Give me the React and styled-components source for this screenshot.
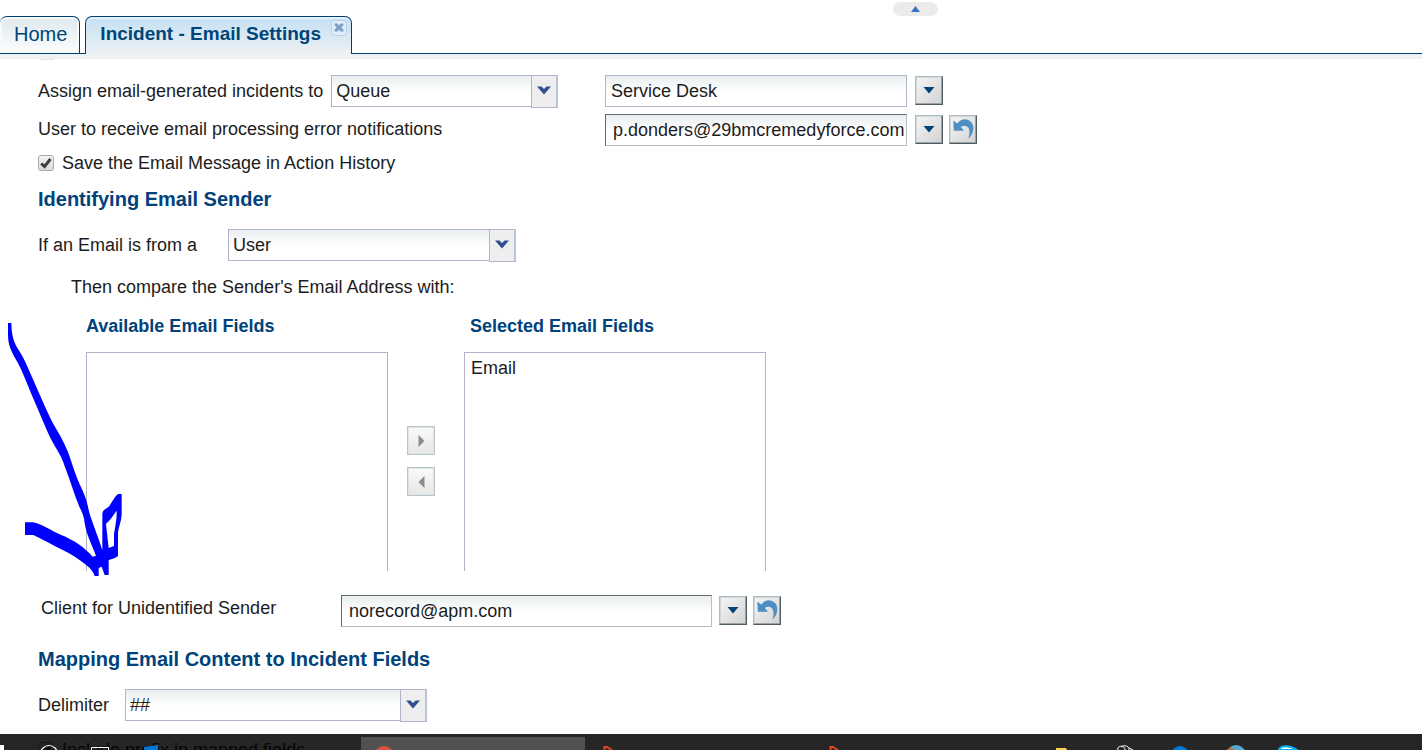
import styled, { createGlobalStyle, css } from 'styled-components';

const App = () => {
  return (
    <Page>
      <GlobalStyle />
      <TopStrip>
        <CollapseButton aria-label="Collapse header">
          <svg width="9" height="6" viewBox="0 0 9 6">
            <path d="M4.5 0 L9 6 H0 Z" fill="#3a72bd" />
          </svg>
        </CollapseButton>
      </TopStrip>
      <TabBar>
        <Tab>
          <TabLink href="#home">Home</TabLink>
        </Tab>
        <Tab $active>
          <TabLink href="#email-settings">Incident - Email Settings</TabLink>
          <CloseButton aria-label="Close tab">
            <svg width="16" height="16" viewBox="0 0 16 16">
              <rect x="0.5" y="0.5" width="15" height="15" rx="3" fill="#e0edfb" stroke="#b5cff0" />
              <path
                d="M3.5 3.5 H6.5 L8 5.5 L9.5 3.5 H12.5 V5 L10.5 7.5 L12.5 10 V11.5 H9.5 L8 9.5 L6.5 11.5 H3.5 V10 L5.5 7.5 L3.5 5 Z"
                fill="#7f9fcb"
              />
            </svg>
          </CloseButton>
        </Tab>
      </TabBar>

      <Content>
        <ScrolledEdge />
        <AssignGrid>
          <Field>
            <Label htmlFor="assignType">Assign email-generated incidents to</Label>
            <Dropdown id="assignType" value="Queue" $width={227} />
          </Field>
          <TextInput aria-label="Queue name" defaultValue="Service Desk" />
          <LookupButtons />
          <Label htmlFor="errorUser">User to receive email processing error notifications</Label>
          <TextInput id="errorUser" $lookup defaultValue="p.donders@29bmcremedyforce.com" />
          <LookupButtons undo />
        </AssignGrid>

        <CheckRow>
          <Checkbox id="saveHistory" />
          <Label htmlFor="saveHistory">Save the Email Message in Action History</Label>
        </CheckRow>

        <SectionTitle>Identifying Email Sender</SectionTitle>
        <SenderRow>
          <Label htmlFor="senderType">If an Email is from a</Label>
          <Dropdown id="senderType" value="User" $width={288} />
        </SenderRow>

        <Hint>Then compare the Sender's Email Address with:</Hint>
        <PickerGrid>
          <ListTitle id="available">Available Email Fields</ListTitle>
          <ListTitle id="selected" $second>
            Selected Email Fields
          </ListTitle>
          <ListBox aria-labelledby="available" />
          <MoveButtons>
            <MoveButton aria-label="Add field">
              <svg width="7" height="12" viewBox="0 0 7 12">
                <path d="M0.5 0 L6.5 6 L0.5 12 Z" fill="#8b8b8b" />
              </svg>
            </MoveButton>
            <MoveButton aria-label="Remove field">
              <svg width="7" height="12" viewBox="0 0 7 12">
                <path d="M6.5 0 L0.5 6 L6.5 12 Z" fill="#8b8b8b" />
              </svg>
            </MoveButton>
          </MoveButtons>
          <ListBox aria-labelledby="selected">
            <li>Email</li>
          </ListBox>
        </PickerGrid>

        <ClientRow>
          <Label htmlFor="client">Client for Unidentified Sender</Label>
          <TextInput id="client" $lookup defaultValue="norecord@apm.com" />
          <LookupButtons undo />
        </ClientRow>

        <SectionTitle>Mapping Email Content to Incident Fields</SectionTitle>
        <DelimiterRow>
          <Label htmlFor="delimiter">Delimiter</Label>
          <Dropdown id="delimiter" value="##" $width={302} />
        </DelimiterRow>
        <CheckRow>
          <Checkbox id="prefix" />
          <Label htmlFor="prefix">Include prefix in mapped fields</Label>
        </CheckRow>
      </Content>

      <InkArrow />
      <Taskbar />
    </Page>
  );
};

const Dropdown = ({ id, value, $width }) => (
  <SelectWrapper $width={$width}>
    <Select id={id} defaultValue={value}>
      <option>{value}</option>
    </Select>
    <SelectCap>
      <svg width="14" height="9" viewBox="0 0 14 9">
        <path d="M0 0.5 H4.5 L7 3 L9.5 0.5 H14 L7 8.5 Z" fill="#2f4f8f" />
      </svg>
    </SelectCap>
  </SelectWrapper>
);

const LookupButtons = ({ undo }) => (
  <ButtonGroup>
    <IconButton aria-label="Look up">
      <svg width="12" height="7" viewBox="0 0 12 7">
        <path d="M0.5 0 H11.5 L6 6.5 Z" fill="#00427a" />
      </svg>
    </IconButton>
    {undo && (
      <IconButton aria-label="Clear">
        <svg width="25" height="25" viewBox="2 2 25 25">
          <path
            d="M4.3 5.5 L8.2 8.6 C11 5.2 14 4 17 4.4 C21.5 5 24.5 8.5 24.3 13.5 C24 18 22.5 21 19.3 23.4 C20.7 19.5 21 16.5 19.8 13.5 C18.5 10.6 15 9.6 11.8 11.9 L15 15.8 H4.8 Z"
            fill="#4d8fc2"
          />
        </svg>
      </IconButton>
    )}
  </ButtonGroup>
);

const Checkbox = ({ id }) => (
  <CheckWrapper>
    <CheckInput type="checkbox" id={id} defaultChecked />
    <CheckMark width="12" height="12" viewBox="0 0 12 12">
      <path d="M1.2 6.5 L4.5 9.5 L10.5 2" fill="none" stroke="#404040" strokeWidth="3" />
    </CheckMark>
  </CheckWrapper>
);

const InkArrow = () => (
  <Ink width="140" height="280" viewBox="0 0 420 840" aria-hidden="true">
    <path
      d="M24 39 H34 C35 78 42 96 50 110 C60 126 70 142 77 158 L100 210 C120 256 140 302 158 338 C176 368 192 396 203 424 C214 452 220 476 232 506 C242 530 254 552 260 574 C265 592 266 606 274 626 C284 656 298 690 307 721 V612 C309 596 320 598 328 588 C338 574 342 562 354 552 H365 V612 C364 636 356 650 354 668 V738 C346 746 336 746 326 750 V795 H314 L305 770 L296 774 V798 H284 C280 786 272 776 262 768 C238 748 214 732 188 720 C158 706 128 688 100 675 H75 V637 H98 C126 642 152 662 182 674 C222 690 254 712 278 740 L288 737 C276 706 260 676 254 640 C252 618 246 606 238 590 C222 552 210 510 196 474 C188 448 178 430 168 414 C156 394 146 374 136 350 L90 242 C78 214 68 186 54 160 C40 134 24 112 24 76 Z M350 602 C340 614 332 630 318 641 L326 714 L342 708 V672 C346 648 351 626 350 602 Z"
      fill="#0000ff"
      fillRule="evenodd"
    />
  </Ink>
);

const Taskbar = () => (
  <TaskbarStrip>
    <ActiveTask />
    <TaskIcons height="16" width="1300" viewBox="0 0 1300 16" aria-hidden="true">
      <rect x="0" y="11" width="4" height="5" fill="#fff" />
      <circle cx="49" cy="20" r="8.5" fill="none" stroke="#fff" strokeWidth="1.2" />
      <path d="M91.5 16 V13.5 H108.5 V16" fill="none" stroke="#fff" />
      <path d="M144 13 L158 11 V16 H144 Z" fill="#0078d4" />
      <circle cx="384" cy="22" r="10" fill="#dc4f41" />
      <path d="M604.5 16 V13 H607 L612 16" fill="none" stroke="#e8431c" strokeWidth="2" />
      <path d="M830.5 16 V13 H833 L838 16" fill="none" stroke="#e8431c" strokeWidth="2" />
      <path d="M1056 16 V14 H1066 L1067 16 Z" fill="#ffd24a" />
      <path
        d="M1118 16 C1116 12 1125 10 1125 16 M1121 13 C1125 10 1130 13 1129 16 M1129 14 L1133 16"
        fill="none"
        stroke="#fff"
      />
      <circle cx="1180" cy="21" r="9" fill="#0078d7" />
      <circle cx="1236" cy="21" r="10" fill="#54a9cc" />
      <path d="M1227 16 L1231 13 L1234 16 Z" fill="#c66a38" />
      <path d="M1279 16 C1280 11 1290 11 1297 16 Z" fill="#fff" stroke="#00aff0" strokeWidth="2" />
    </TaskIcons>
  </TaskbarStrip>
);

const GlobalStyle = createGlobalStyle`
  * {
    box-sizing: border-box;
  }
  body {
    margin: 0;
    background: white;
    color: #1c1c1c;
    font-family: 'Liberation Sans', Arial, sans-serif;
    font-size: 18px;
    line-height: 20px;
  }
  button, input, select {
    font: inherit;
    color: inherit;
    margin: 0;
  }
  button {
    padding: 0;
  }
`;

const Page = styled.div`
  position: relative;
  height: 100vh;
  overflow: hidden;
`;
const TopStrip = styled.div`
  height: 16px;
  padding-top: 2px;
  padding-left: 62.8%;
`;
const CollapseButton = styled.button`
  display: flex;
  justify-content: center;
  align-items: center;
  width: 45px;
  height: 14px;
  border: none;
  border-radius: 7px;
  background: #ebebeb;
`;
const TabBar = styled.nav`
  display: flex;
  gap: 5px;
  height: 43px;
  border-bottom: 5px solid #edf1f4;
  background: linear-gradient(#004071, #004071) bottom / 100% 1px no-repeat;
`;
const Tab = styled.div`
  display: flex;
  height: 38px;
  padding: 0 12px 0 14px;
  border: 1px solid #004071;
  border-radius: 7px 7px 0 0;
  background: linear-gradient(#dfe9ee, #fcfdfd);
  box-shadow: inset 0 0 0 2px #f6fafb;
  font-size: 20px;

  &:first-child {
    border-left: none;
  }

  ${(props) =>
    props.$active &&
    css`
      padding: 0 4px 0 14px;
      border-bottom: none;
      background: linear-gradient(#c4e0f3, #edf1f4);
      box-shadow: inset 0 2px 0 #e4f1fa;
      font-size: 19px;
      font-weight: 700;
    `}
`;
const TabLink = styled.a`
  color: #004578;
  line-height: 34px;
  text-decoration: none;
  white-space: nowrap;
`;
const CloseButton = styled.button`
  width: 16px;
  height: 16px;
  margin: 3px 0 0 10px;
  border: none;
  background: none;
  line-height: 0;
`;
const Content = styled.main`
  padding-left: 38px;
`;
const ScrolledEdge = styled.div`
  width: 14px;
  height: 1px;
  margin: 0 2px 15px;
  background: #e4e4e4;
`;
const AssignGrid = styled.div`
  display: grid;
  grid-template-columns: 559px 302px auto;
  grid-auto-rows: 32px;
  column-gap: 8px;
  row-gap: 7px;

  & > label {
    line-height: 30px;
  }
`;
const Field = styled.div`
  display: flex;
  gap: 8px;

  label {
    line-height: 32px;
  }
`;
const Label = styled.label`
  white-space: nowrap;
`;
const TextInput = styled.input`
  width: 100%;
  height: 32px;
  padding: 0 5px;
  border: 1px solid #b2b2c8;
  border-radius: 0;
  background: linear-gradient(#e9eeee, #fff 16px);

  ${(props) =>
    props.$lookup &&
    css`
      padding: 0 0 0 7px;
      border-color: #606b70 #b4c0c8 #b4c0c8 #606b70;
    `}
`;
const SelectWrapper = styled.div`
  display: grid;
  flex: none;
  width: ${(props) => props.$width}px;
  height: 33px;
`;
const Select = styled.select`
  grid-area: 1 / 1;
  width: 100%;
  height: 32px;
  padding: 0 30px 0 4px;
  appearance: none;
  border: 1px solid #b2b2c8;
  border-radius: 0;
  background: linear-gradient(#e9eeee, #fff 16px);
  line-height: 20px;
`;
const SelectCap = styled.span`
  grid-area: 1 / 1;
  justify-self: end;
  display: flex;
  justify-content: center;
  width: 27px;
  height: 33px;
  padding-top: 10px;
  border: 1px solid #b2b2c8;
  border-right: 2px solid #b8c4dc;
  background: #eee;
  pointer-events: none;
`;
const ButtonGroup = styled.div`
  display: flex;
  align-items: flex-start;
  gap: 6px;
  padding-top: 1px;
`;
const IconButton = styled.button`
  display: flex;
  justify-content: center;
  align-items: center;
  width: 28px;
  height: 29px;
  border: 1px solid;
  border-color: #b0bcc2 #4f5b62 #4f5b62 #b0bcc2;
  box-shadow: inset -1px -1px 0 #9aa2a6, inset 1px 1px 0 #d0d8dc;
  background: linear-gradient(135deg, #f6f6f6, #d2d2d2);
`;
const CheckRow = styled.div`
  display: flex;
  align-items: center;
  gap: 8px;
  height: 20px;
  margin-top: 7px;
`;
const CheckWrapper = styled.span`
  display: grid;
  place-items: center;
  width: 16px;
  height: 16px;
`;
const CheckInput = styled.input`
  grid-area: 1 / 1;
  width: 16px;
  height: 16px;
  appearance: none;
  border: 1px solid #a9a9a9;
  border-radius: 3px;
  background: linear-gradient(#f2f2f2, #dcdcdc);
`;
const CheckMark = styled.svg`
  grid-area: 1 / 1;
  pointer-events: none;

  ${CheckInput}:not(:checked) + & {
    visibility: hidden;
  }
`;
const SectionTitle = styled.h2`
  margin: 14px 0 18px;
  color: #00427a;
  font-size: 20px;
  line-height: 24px;
`;
const SenderRow = styled.div`
  display: grid;
  grid-template-columns: 190px auto;
  line-height: 32px;
`;
const Hint = styled.p`
  margin: 15px 0 0 33px;
`;
const PickerGrid = styled.div`
  display: grid;
  grid-template-columns: 302px 76px 302px;
  grid-template-rows: 55px 219px;
  padding-left: 48px;
`;
const ListTitle = styled.h3`
  grid-column: ${(props) => (props.$second ? 3 : 1)};
  margin: 0;
  padding-top: 19px;
  padding-left: ${(props) => (props.$second ? 6 : 0)}px;
  color: #00427a;
  font-size: 18px;
`;
const ListBox = styled.ul`
  margin: 0;
  padding: 5px 6px;
  border: 1px solid #b2b2c8;
  border-bottom: none;
  list-style: none;
`;
const MoveButtons = styled.div`
  display: flex;
  flex-direction: column;
  align-items: center;
  gap: 12px;
  padding-top: 74px;
  padding-right: 10px;
`;
const MoveButton = styled(IconButton)`
  border-color: #b9c5ca;
  box-shadow: inset 0 0 0 1px #dde4e7;
  background: linear-gradient(#fafafa, #e6e6e6);
`;
const ClientRow = styled.div`
  display: grid;
  grid-template-columns: 300px 371px auto;
  margin-top: 24px;
  margin-bottom: 20px;
  padding-left: 3px;

  label {
    line-height: 26px;
  }
  ${ButtonGroup} {
    padding-left: 7px;
  }
`;
const DelimiterRow = styled.div`
  display: grid;
  grid-template-columns: 87px auto;
  margin-bottom: 18px;
  line-height: 32px;
`;
const Ink = styled.svg`
  position: absolute;
  top: 310px;
  left: 0;
  pointer-events: none;
`;
const TaskbarStrip = styled.footer`
  position: absolute;
  bottom: 0;
  left: 0;
  right: 0;
  height: 16px;
  overflow: hidden;
  background: rgba(0, 0, 0, 0.85);
`;
const ActiveTask = styled.div`
  width: 224px;
  height: 13px;
  margin: 3px 0 0 361px;
  background: #515151;
`;
const TaskIcons = styled.svg`
  position: absolute;
  top: 0;
  left: 0;
`;

export default App;
